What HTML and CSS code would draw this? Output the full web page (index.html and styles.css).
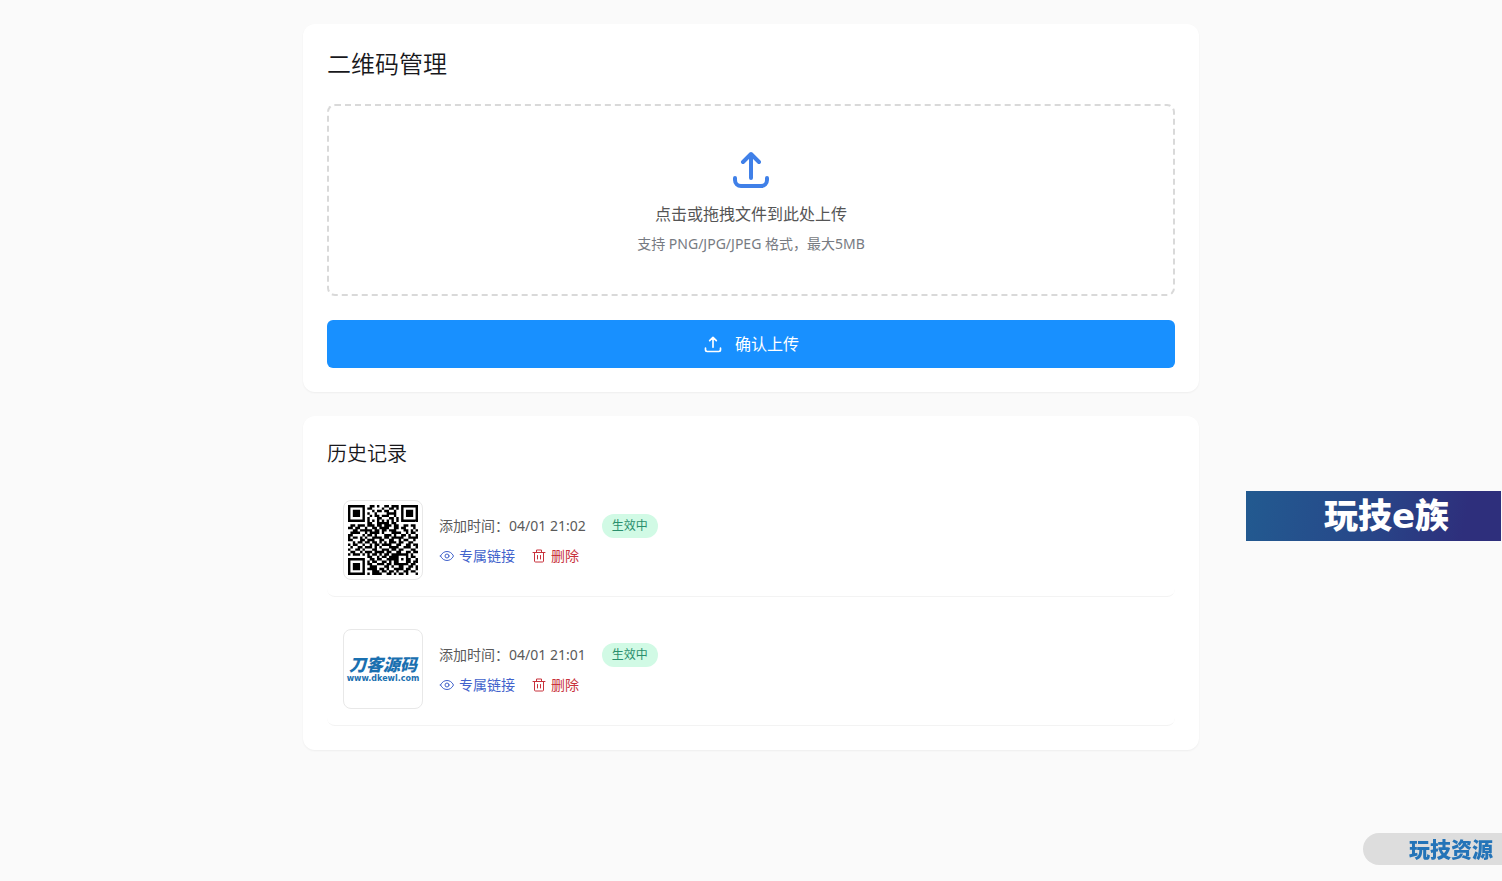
FILE: index.html
```html
<!DOCTYPE html>
<html lang="zh-CN">
<head>
  <meta charset="UTF-8">
  <meta name="viewport" content="width=device-width, initial-scale=1.0">
  <title>二维码管理</title>
  <link rel="stylesheet" href="styles.css">
</head>
<body>

  <main class="container">

    <!-- 上传 -->
    <section class="card">
      <h1 class="title">二维码管理</h1>
      <label class="dropzone">
        <input type="file" class="file-input" id="fileInput" accept=".png,.jpg,.jpeg">
        <svg class="dropzone-icon" viewBox="0 0 24 24"><path d="M4 16v1a3 3 0 003 3h10a3 3 0 003-3v-1m-4-8l-4-4m0 0L8 8m4-4v12"/></svg>
        <span class="dropzone-text">点击或拖拽文件到此处上传</span>
        <span class="dropzone-hint">支持 PNG/JPG/JPEG 格式，最大5MB</span>
      </label>
      <button type="button" class="upload-btn">
        <svg viewBox="0 0 24 24"><path d="M3 17v2a2 2 0 002 2h14a2 2 0 002-2v-2m-5-9l-4-4m0 0L8 8m4-4v12"/></svg>
        确认上传
      </button>
    </section>

    <!-- 历史记录 -->
    <section class="card">
      <h2 class="subtitle">历史记录</h2>
      <ul class="history">
        <li class="item">
          <div class="thumb">
            <svg class="qr" id="qr" viewBox="0 0 29 29" role="img" aria-label="二维码"></svg>
          </div>
          <div class="info">
            <div class="row">
              <span class="time">添加时间：04/01 21:02</span>
              <span class="badge">生效中</span>
            </div>
            <div class="row">
              <a href="#" class="action link">
                <svg viewBox="0 0 16 16"><path d="M1.500 8C3 5 5.300 3.500 8 3.500S13 5 14.500 8C13 11 10.700 12.500 8 12.500S3 11 1.500 8z"/><circle cx="8" cy="8" r="2"/></svg>
                专属链接
              </a>
              <button type="button" class="action delete">
                <svg viewBox="0 0 16 16"><path d="M2 4.500h12M5.500 4.500v-2.500h5v2.500M3.500 4.500v8.500a1 1 0 001 1h7a1 1 0 001-1v-8.500M6.500 7.500v3.500M9.500 7.500v3.500"/></svg>
                删除
              </button>
            </div>
          </div>
        </li>
        <li class="item">
          <div class="thumb logo">
            <span class="logo-name">刀客源码</span>
            <span class="logo-url">www.dkewl.com</span>
          </div>
          <div class="info">
            <div class="row">
              <span class="time">添加时间：04/01 21:01</span>
              <span class="badge">生效中</span>
            </div>
            <div class="row">
              <a href="#" class="action link">
                <svg viewBox="0 0 16 16"><path d="M1.500 8C3 5 5.300 3.500 8 3.500S13 5 14.500 8C13 11 10.700 12.500 8 12.500S3 11 1.500 8z"/><circle cx="8" cy="8" r="2"/></svg>
                专属链接
              </a>
              <button type="button" class="action delete">
                <svg viewBox="0 0 16 16"><path d="M2 4.500h12M5.500 4.500v-2.500h5v2.500M3.500 4.500v8.500a1 1 0 001 1h7a1 1 0 001-1v-8.500M6.500 7.500v3.500M9.500 7.500v3.500"/></svg>
                删除
              </button>
            </div>
          </div>
        </li>
      </ul>
    </section>

  </main>

  <a href="#" class="banner">玩技e族</a>
  <a href="#" class="corner">玩技资源</a>

  <script src="qr.js"></script>
</body>
</html>
```
FILE: styles.css
```css
* {
  box-sizing: border-box;
}
body {
  margin: 0;
  background: #fafafa;
  color: #18181c;
  font-family: "Noto Sans", "Noto Sans CJK SC", sans-serif;
}
h1, h2, ul {
  margin: 0;
  padding: 0;
  font-weight: 350;
}
a {
  text-decoration: none;
}
button {
  border: none;
  cursor: pointer;
  font: inherit;
}
svg {
  display: block;
  fill: none;
  stroke: currentColor;
  stroke-linecap: round;
  stroke-linejoin: round;
}
.container {
  max-width: 896px;
  margin: 24px auto;
  display: flex;
  flex-direction: column;
  gap: 24px;
}
.card {
  padding: 24px;
  background: #fff;
  border-radius: 12px;
  box-shadow: 0 1px 2px rgba(0, 0, 0, 0.05);
}
.title {
  margin-bottom: 24px;
  font-size: 24px;
  line-height: 32px;
}
.subtitle {
  margin-bottom: 16px;
  font-size: 20px;
  line-height: 28px;
}

/* 上传区域 */
.dropzone {
  display: flex;
  flex-direction: column;
  align-items: center;
  gap: 8px;
  padding: 40px;
  border: 2px dashed #d9d9d9;
  border-radius: 8px;
  cursor: pointer;
}
.file-input {
  display: none;
}
.dropzone-icon {
  width: 48px;
  height: 48px;
  color: #4080e8;
  stroke-width: 2;
}
.dropzone-text {
  color: #555;
  font-size: 16px;
  line-height: 24px;
}
.dropzone-hint {
  color: #777b82;
  font-size: 14px;
  line-height: 20px;
}
.upload-btn {
  display: flex;
  align-items: center;
  justify-content: center;
  gap: 12px;
  width: 100%;
  margin-top: 24px;
  padding: 12px;
  border-radius: 6px;
  background: #1890ff;
  color: #fff;
  font-size: 16px;
  line-height: 24px;
}
.upload-btn svg {
  width: 20px;
  height: 20px;
  stroke-width: 2;
}

/* 历史记录 */
.history {
  display: flex;
  flex-direction: column;
  gap: 16px;
  list-style: none;
  font-weight: 400;
}
.item {
  display: flex;
  align-items: center;
  gap: 16px;
  padding: 16px;
  border-bottom: 1px solid #f3f3f3;
  border-radius: 8px;
}
.thumb {
  width: 80px;
  height: 80px;
  padding: 4px;
  border: 1px solid #e8e8e8;
  border-radius: 8px;
}
.qr {
  width: 100%;
  fill: #000;
  stroke: none;
}
.logo {
  display: flex;
  flex-direction: column;
  align-items: center;
  justify-content: center;
  color: #1a70b0;
  font-weight: 900;
}
.logo-name {
  font-size: 17px;
  font-style: italic;
  line-height: 20px;
}
.logo-url {
  font-family: "DejaVu Sans", sans-serif;
  font-size: 8px;
  line-height: 8px;
}
.info {
  display: flex;
  flex-direction: column;
  gap: 8px;
}
.row {
  display: flex;
  align-items: center;
  gap: 16px;
}
.time {
  color: #5a5a5a;
  font-size: 14px;
  line-height: 20px;
}
.badge {
  padding: 4px 10px;
  border-radius: 12px;
  background: #d1fae5;
  color: #2a8f6c;
  font-size: 12px;
  line-height: 16px;
}
.action {
  display: flex;
  align-items: center;
  gap: 4px;
  padding: 0;
  background: none;
  font-size: 14px;
  line-height: 20px;
}
.action svg {
  width: 16px;
  height: 16px;
}
.link {
  color: #4263cc;
}
.delete {
  color: #c8323c;
}

/* 右侧悬浮 */
.banner {
  position: fixed;
  top: 491px;
  right: 1px;
  width: 255px;
  padding-left: 26px;
  background: linear-gradient(100deg, #225a90, #27498a 45%, #2e2f7c 85%);
  color: #fff;
  font-family: "DejaVu Sans", "Noto Sans CJK SC", sans-serif;
  font-size: 34px;
  font-weight: 900;
  line-height: 50px;
  text-align: center;
}
.corner {
  position: fixed;
  right: 0;
  bottom: 16px;
  width: 139px;
  padding-right: 9px;
  border-radius: 16px 0 0 16px;
  background: #ddd;
  color: #2474b8;
  font-size: 21px;
  font-weight: 900;
  line-height: 32px;
  text-align: right;
}
```
FILE: qr.js
```js
const rows = [
  "11111110011010011011101111111",
  "10000010110000100110101000001",
  "10111010001011011001001011101",
  "10111010100100001111001011101",
  "10111010010110111001001011101",
  "10000010100011000110101000001",
  "11111110101010101010101111111",
  "00000000110011111011000000000",
  "01101110111011011101100110110",
  "11011001001101111001101100010",
  "00110111110110110111000110101",
  "01111001011110100011110010110",
  "11000010110100011101001101001",
  "10110101001111011011111001111",
  "11000110111001100110010110010",
  "00101101101101010111011001100",
  "10110010010110111100110011011",
  "01001101110101000111100111001",
  "10011010001100111011011000110",
  "01100101110111101100110011011",
  "10111010101101011011111110100",
  "00000000110010110111100010110",
  "11111110011011001111101011001",
  "10000010101100110101100011011",
  "10111010110011101101111110110",
  "10111010011100011010011001101",
  "10111010111101101001111011001",
  "10000010001110110110100110110",
  "11111110101111001101011010001"
];

let d = "";
rows.forEach((row, y) => {
  [...row].forEach((cell, x) => {
    if (cell === "1") d += `M${x} ${y}h1v1h-1z`;
  });
});

const path = document.createElementNS("http://www.w3.org/2000/svg", "path");
path.setAttribute("d", d);
document.getElementById("qr").appendChild(path);
```
